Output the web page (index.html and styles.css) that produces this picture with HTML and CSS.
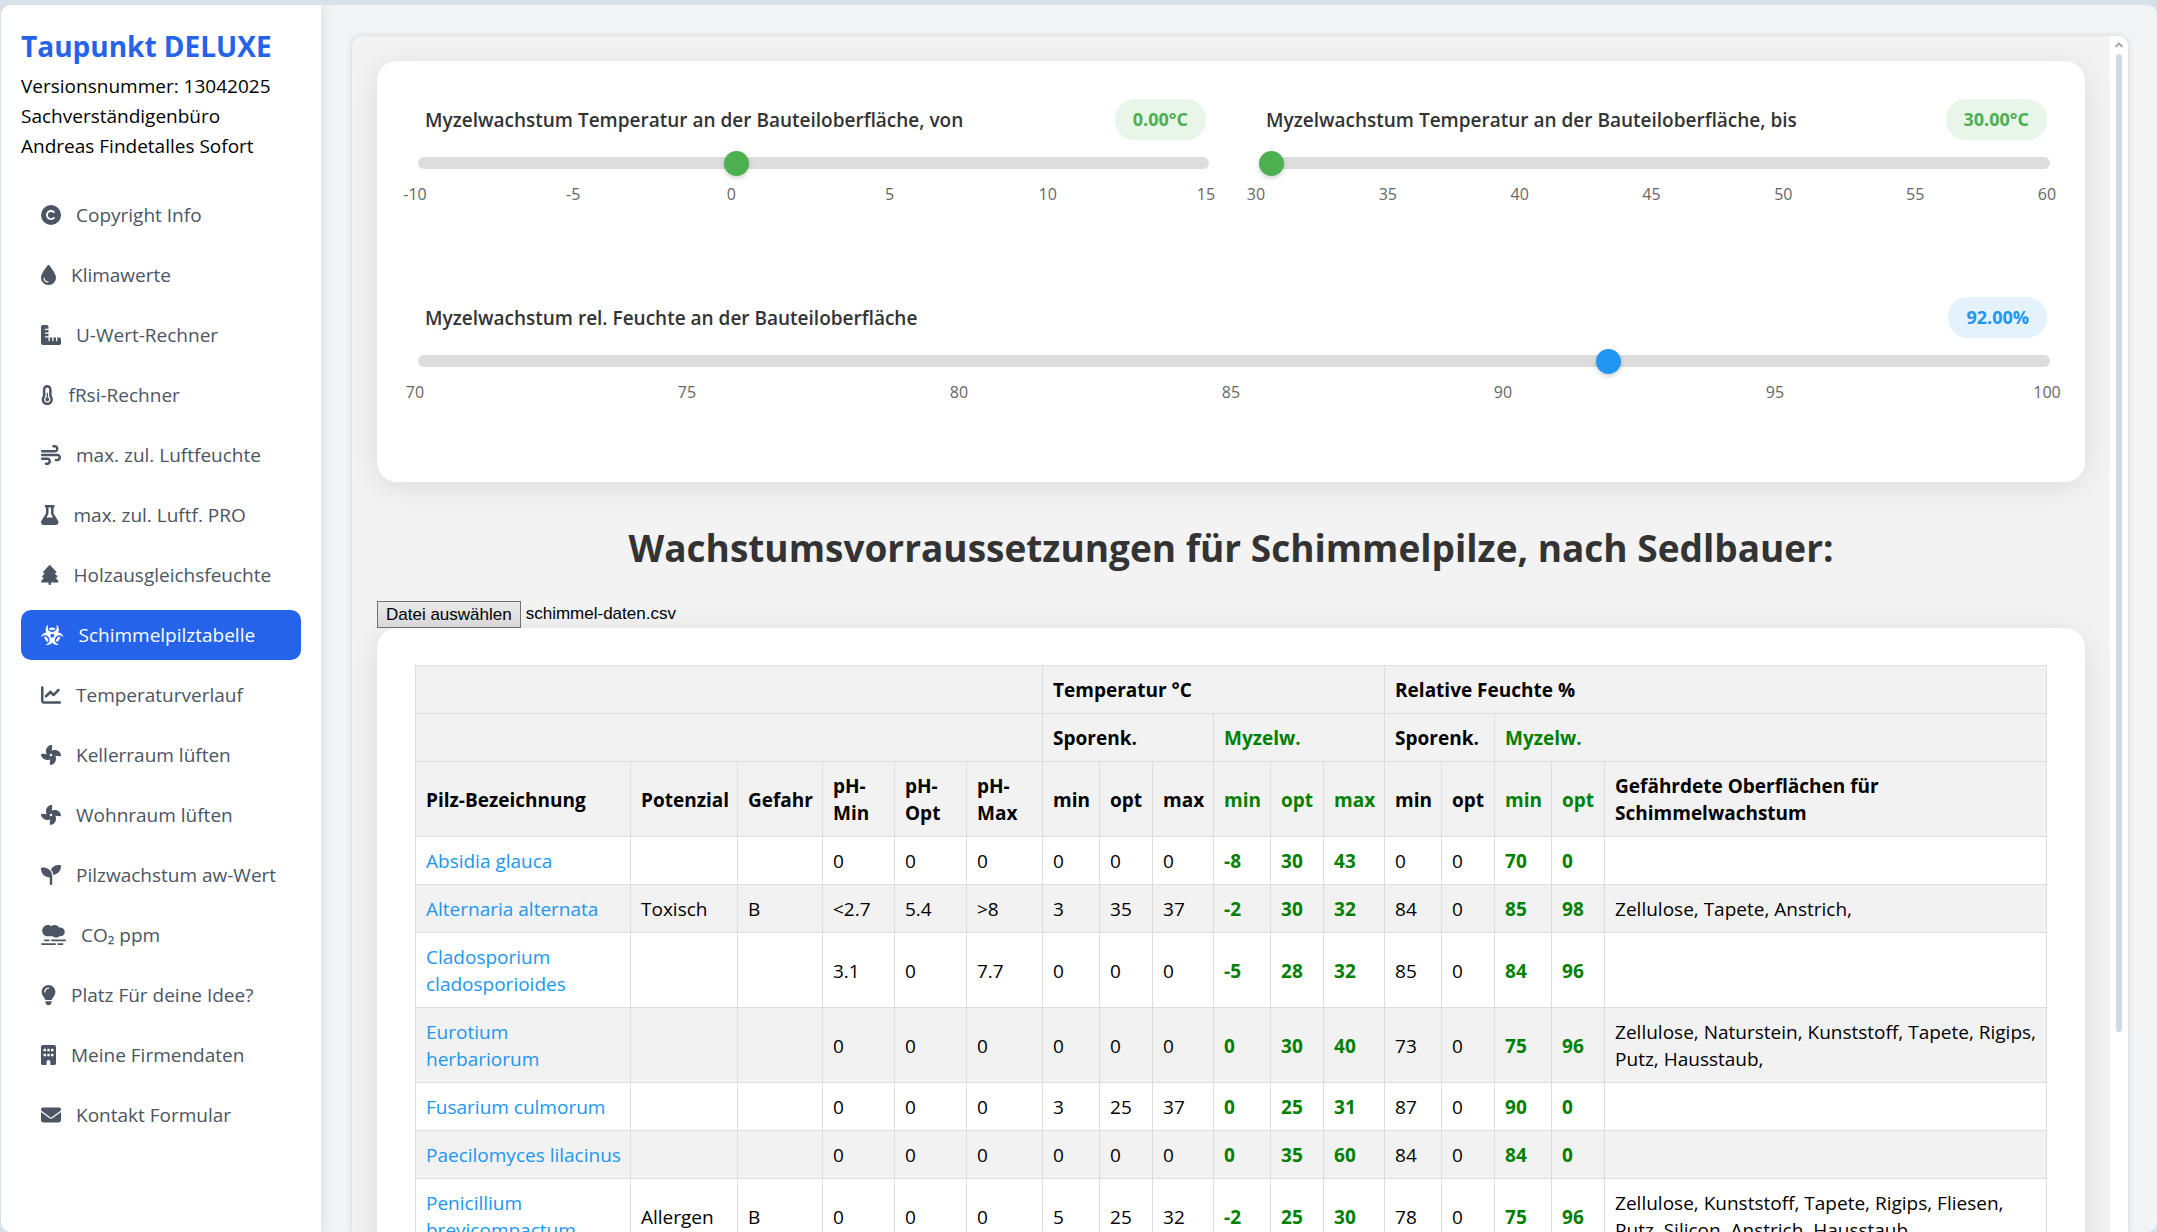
FILE: index.html
```html
<!DOCTYPE html>
<html lang="de">
<head>
  <meta charset="UTF-8">
  <meta name="viewport" content="width=device-width, initial-scale=1.0">
  <title>Taupunkt DELUXE</title>
  <link rel="stylesheet" href="styles.css">
</head>
<body>
  <div class="app">
    <!-- Seitenleiste -->
    <aside class="sidebar">
      <h2>Taupunkt DELUXE</h2>
      <p>Versionsnummer: 13042025<br>Sachverständigenbüro<br>Andreas Findetalles Sofort</p>
      <nav>
        <a href="#copyright"><svg viewBox="0 0 512 512"><path d="M256 512A256 256 0 1 0 256 0a256 256 0 1 0 0 512zM199.4 312.6c31.2 31.2 81.9 31.2 113.1 0c9.4-9.4 24.6-9.4 33.9 0s9.4 24.6 0 33.9c-50 50-131 50-181 0s-50-131 0-181s131-50 181 0c9.4 9.4 9.4 24.6 0 33.9s-24.6 9.4-33.9 0c-31.2-31.2-81.9-31.2-113.1 0s-31.2 81.9 0 113.1z"/></svg>Copyright Info</a>
        <a href="#klima"><svg viewBox="0 0 384 512"><path d="M192 512C86 512 0 426 0 320C0 228.8 130.2 57.7 166.6 11.7C172.6 4.2 181.5 0 191.1 0h1.8c9.6 0 18.5 4.2 24.5 11.7C253.8 57.7 384 228.8 384 320c0 106-86 192-192 192zM96 336c0-8.8-7.2-16-16-16s-16 7.2-16 16c0 61.9 50.1 112 112 112c8.8 0 16-7.2 16-16s-7.2-16-16-16c-44.2 0-80-35.8-80-80z"/></svg>Klimawerte</a>
        <a href="#uwert"><svg viewBox="0 0 512 512"><path d="M.2 468.9C2.7 493.1 23.1 512 48 512l96 0 320 0c26.5 0 48-21.5 48-48l0-96c0-26.5-21.5-48-48-48l-48 0 0 80c0 8.8-7.2 16-16 16s-16-7.2-16-16l0-80-64 0 0 80c0 8.8-7.2 16-16 16s-16-7.2-16-16l0-80-64 0 0 80c0 8.8-7.2 16-16 16s-16-7.2-16-16l0-80-80 0c-8.8 0-16-7.2-16-16s7.2-16 16-16l80 0 0-64-80 0c-8.8 0-16-7.2-16-16s7.2-16 16-16l80 0 0-64-80 0c-8.8 0-16-7.2-16-16s7.2-16 16-16l80 0 0-48c0-26.5-21.5-48-48-48L48 0C21.5 0 0 21.5 0 48L0 368l0 96c0 1.7 .1 3.3 .2 4.9z"/></svg>U-Wert-Rechner</a>
        <a href="#frsi"><svg viewBox="0 0 320 512"><path d="M160 64c-26.5 0-48 21.5-48 48V276.5c0 17.3-7.1 31.9-15.3 42.5C86.2 332.6 80 349.5 80 368c0 44.2 35.8 80 80 80s80-35.8 80-80c0-18.5-6.2-35.4-16.7-48.9c-8.2-10.6-15.3-25.2-15.3-42.5V112c0-26.5-21.5-48-48-48zM48 112C48 50.2 98.1 0 160 0s112 50.1 112 112V276.5c0 .1 .1 .3 .2 .6c.2 .6 .8 1.6 1.7 2.8c18.9 24.4 30.1 55 30.1 88.1c0 79.5-64.5 144-144 144S16 447.5 16 368c0-33.2 11.2-63.8 30.1-88.1c.9-1.2 1.5-2.2 1.7-2.8c.1-.3 .2-.5 .2-.6V112zM208 368c0 26.5-21.5 48-48 48s-48-21.5-48-48c0-20.9 13.4-38.7 32-45.3V208c0-8.8 7.2-16 16-16s16 7.2 16 16V322.7c18.6 6.6 32 24.4 32 45.3z"/></svg>fRsi-Rechner</a>
        <a href="#luftfeuchte"><svg viewBox="0 0 512 512"><path d="M288 32c0 17.7 14.3 32 32 32h32c17.7 0 32 14.3 32 32s-14.3 32-32 32H32c-17.7 0-32 14.3-32 32s14.3 32 32 32H352c53 0 96-43 96-96s-43-96-96-96H320c-17.7 0-32 14.3-32 32zm64 352c0 17.7 14.3 32 32 32h32c53 0 96-43 96-96s-43-96-96-96H32c-17.7 0-32 14.3-32 32s14.3 32 32 32H416c17.7 0 32 14.3 32 32s-14.3 32-32 32H384c-17.7 0-32 14.3-32 32zM128 512h32c53 0 96-43 96-96s-43-96-96-96H32c-17.7 0-32 14.3-32 32s14.3 32 32 32H160c17.7 0 32 14.3 32 32s-14.3 32-32 32H128c-17.7 0-32 14.3-32 32s14.3 32 32 32z"/></svg>max. zul. Luftfeuchte</a>
        <a href="#luftpro"><svg viewBox="0 0 448 512"><path d="M288 0H160 128C110.3 0 96 14.3 96 32s14.3 32 32 32V196.8c0 11.8-3.3 23.5-9.5 33.5L10.3 406.2C3.6 417.2 0 429.7 0 442.6C0 480.9 31.1 512 69.4 512H378.6c38.3 0 69.4-31.1 69.4-69.4c0-12.8-3.6-25.4-10.3-36.4L329.5 230.4c-6.2-10.1-9.5-21.7-9.5-33.5V64c17.7 0 32-14.3 32-32s-14.3-32-32-32H288zM192 196.8V64h64V196.8c0 23.7 6.6 46.9 19 67.1L309.5 320h-171L173 263.9c12.4-20.2 19-43.4 19-67.1z"/></svg>max. zul. Luftf. PRO</a>
        <a href="#holz"><svg viewBox="0 0 448 512"><path d="M210.6 5.9L62 169.4c-3.9 4.2-6 9.8-6 15.5C56 197.7 66.3 208 79.1 208H104L30.6 281.4c-4.2 4.2-6.6 10-6.6 16C24 309.9 34.1 320 46.6 320H80L5.4 409.5C1.9 413.7 0 419 0 424.5c0 13 10.5 23.5 23.5 23.5H192v32c0 17.7 14.3 32 32 32s32-14.3 32-32V448H424.5c13 0 23.5-10.5 23.5-23.5c0-5.5-1.9-10.8-5.4-15L368 320h33.4c12.5 0 22.6-10.1 22.6-22.6c0-6-2.4-11.8-6.6-16L344 208h24.9c12.7 0 23.1-10.3 23.1-23.1c0-5.7-2.1-11.3-6-15.5L237.4 5.9C234 2.1 229.1 0 224 0s-10 2.1-13.4 5.9z"/></svg>Holzausgleichsfeuchte</a>
        <a href="#schimmel" class="active"><svg viewBox="0 0 576 512"><path d="M173.2 0c-1.8 0-3.5 .7-4.8 2C138.5 32.3 120 74 120 120c0 26.2 6 50.9 16.6 73c-22 2.4-43.8 9.1-64.2 20.5C37.9 232.8 13.3 262.4 .4 296c-.7 1.7-.5 3.7 .5 5.2c2.2 3.7 7.4 4.3 10.6 1.3C64.2 254.3 158 245.1 205 324s-8.1 153.1-77.6 173.2c-4.2 1.2-6.3 5.9-4.1 9.6c1 1.6 2.6 2.7 4.5 3c36.5 5.9 75.2 .1 109.7-19.2c20.4-11.4 37.4-26.5 50.5-43.8c13.1 17.3 30.1 32.4 50.5 43.8c34.5 19.3 73.3 25.2 109.7 19.2c1.9-.3 3.5-1.4 4.5-3c2.2-3.7 .1-8.4-4.1-9.6C379.1 477.1 324 403 371 324s140.7-69.8 193.5-21.4c3.2 2.9 8.4 2.3 10.6-1.3c1-1.6 1.1-3.5 .5-5.2c-12.9-33.6-37.5-63.2-72.1-82.5c-20.4-11.4-42.2-18.1-64.2-20.5C450 170.9 456 146.2 456 120c0-46-18.5-87.7-48.4-118c-1.3-1.3-3-2-4.8-2c-5 0-8.4 5.2-6.7 9.9C421.7 80.5 385.6 176 288 176S154.3 80.5 179.9 9.9c1.7-4.7-1.6-9.9-6.7-9.9zM240 272a48 48 0 1 1 96 0 48 48 0 1 1 -96 0zM181.7 417.6c6.3-11.8 9.8-25.1 8.6-39.8c-19.5-18-34-41.4-41.2-67.8c-12.5-8.1-26.2-11.8-40-12.4c-9-.4-18.1 .6-27.1 2.7c7.8 57.1 38.7 106.8 82.9 139.4c6.8-6.7 12.6-14.1 16.8-22.1zM288 64c-28.8 0-56.3 5.9-81.2 16.5c2 8.3 5 16.2 9 23.5c6.8 12.4 16.7 23.1 30.1 30.3c13.3-4.1 27.5-6.3 42.2-6.3s28.8 2.2 42.2 6.3c13.4-7.2 23.3-17.9 30.1-30.3c4-7.3 7-15.2 9-23.5C344.3 69.9 316.8 64 288 64zM426.9 310c-7.2 26.4-21.7 49.7-41.2 67.8c-1.2 14.7 2.2 28.1 8.6 39.8c4.3 8 10 15.4 16.8 22.1c44.3-32.6 75.2-82.3 82.9-139.4c-9-2.2-18.1-3.1-27.1-2.7c-13.8 .6-27.5 4.4-40 12.4z"/></svg>Schimmelpilztabelle</a>
        <a href="#temperatur"><svg viewBox="0 0 512 512"><path d="M64 64c0-17.7-14.3-32-32-32S0 46.3 0 64V400c0 44.2 35.8 80 80 80H480c17.7 0 32-14.3 32-32s-14.3-32-32-32H80c-8.8 0-16-7.2-16-16V64zm406.6 86.6c12.5-12.5 12.5-32.8 0-45.3s-32.8-12.5-45.3 0L320 210.7l-57.4-57.4c-12.5-12.5-32.8-12.5-45.3 0l-112 112c-12.5 12.5-12.5 32.8 0 45.3s32.8 12.5 45.3 0L240 221.3l57.4 57.4c12.5 12.5 32.8 12.5 45.3 0l128-128z"/></svg>Temperaturverlauf</a>
        <a href="#keller"><svg viewBox="0 0 512 512"><path d="M258.6 0c-1.7 0-3.4 .1-5.1 .5C168 17 115.6 102.3 130.5 189.3c2.9 17 8.4 32.9 15.9 47.4L32 224H29.4C13.2 224 0 237.2 0 253.4c0 1.7 .1 3.4 .5 5.1C17 344 102.3 396.4 189.3 381.5c17-2.9 32.9-8.4 47.4-15.9L224 480v2.6c0 16.2 13.2 29.4 29.4 29.4c1.7 0 3.4-.1 5.1-.5C344 495 396.4 409.7 381.5 322.7c-2.9-17-8.4-32.9-15.9-47.4L480 288h2.6c16.2 0 29.4-13.2 29.4-29.4c0-1.7-.1-3.4-.5-5.1C495 168 409.7 115.6 322.7 130.5c-17 2.9-32.9 8.4-47.4 15.9L288 32V29.4C288 13.2 274.8 0 258.6 0zM256 224a32 32 0 1 1 0 64 32 32 0 1 1 0-64z"/></svg>Kellerraum lüften</a>
        <a href="#wohnraum"><svg viewBox="0 0 512 512"><path d="M258.6 0c-1.7 0-3.4 .1-5.1 .5C168 17 115.6 102.3 130.5 189.3c2.9 17 8.4 32.9 15.9 47.4L32 224H29.4C13.2 224 0 237.2 0 253.4c0 1.7 .1 3.4 .5 5.1C17 344 102.3 396.4 189.3 381.5c17-2.9 32.9-8.4 47.4-15.9L224 480v2.6c0 16.2 13.2 29.4 29.4 29.4c1.7 0 3.4-.1 5.1-.5C344 495 396.4 409.7 381.5 322.7c-2.9-17-8.4-32.9-15.9-47.4L480 288h2.6c16.2 0 29.4-13.2 29.4-29.4c0-1.7-.1-3.4-.5-5.1C495 168 409.7 115.6 322.7 130.5c-17 2.9-32.9 8.4-47.4 15.9L288 32V29.4C288 13.2 274.8 0 258.6 0zM256 224a32 32 0 1 1 0 64 32 32 0 1 1 0-64z"/></svg>Wohnraum lüften</a>
        <a href="#awwert"><svg viewBox="0 0 512 512"><path d="M512 32c0 113.6-84.6 207.5-194.2 222c-7.1-53.4-30.6-101.6-65.3-139.3C290.8 46.3 364 0 448 0h32c17.7 0 32 14.3 32 32zM0 96C0 78.3 14.3 64 32 64H64c123.7 0 224 100.3 224 224v32V480c0 17.7-14.3 32-32 32s-32-14.3-32-32V320C100.3 320 0 219.7 0 96z"/></svg>Pilzwachstum aw-Wert</a>
        <a href="#co2"><svg viewBox="0 0 640 512"><path d="M32 144c0 79.5 64.5 144 144 144H299.3c22.6 19.9 52.2 32 84.7 32s62.1-12.1 84.7-32H496c61.9 0 112-50.1 112-112s-50.1-112-112-112c-10.7 0-21 1.5-30.8 4.3C443.8 27.7 401.1 0 352 0c-32.6 0-62.4 12.2-85.1 32.3C242.1 12.1 210.5 0 176 0C96.5 0 32 64.5 32 144zM616 368H280c-13.3 0-24 10.7-24 24s10.7 24 24 24H616c13.3 0 24-10.7 24-24s-10.7-24-24-24zm-64 96H440c-13.3 0-24 10.7-24 24s10.7 24 24 24H552c13.3 0 24-10.7 24-24s-10.7-24-24-24zm-192 0H24c-13.3 0-24 10.7-24 24s10.7 24 24 24H360c13.3 0 24-10.7 24-24s-10.7-24-24-24zM224 392c0-13.3-10.7-24-24-24H96c-13.3 0-24 10.7-24 24s10.7 24 24 24H200c13.3 0 24-10.7 24-24z"/></svg>CO₂ ppm</a>
        <a href="#idee"><svg viewBox="0 0 384 512"><path d="M272 384c9.6-31.9 29.5-59.1 49.2-86.2l0 0c5.2-7.1 10.4-14.2 15.4-21.4c19.8-28.5 31.4-63 31.4-100.3C368 78.8 289.2 0 192 0S16 78.8 16 176c0 37.3 11.6 71.9 31.4 100.3c5 7.2 10.2 14.3 15.4 21.4l0 0c19.8 27.1 39.7 54.4 49.2 86.2H272zM192 512c44.2 0 80-35.8 80-80V416H112v16c0 44.2 35.8 80 80 80zM112 176c0 8.8-7.2 16-16 16s-16-7.2-16-16c0-61.9 50.1-112 112-112c8.8 0 16 7.2 16 16s-7.2 16-16 16c-44.2 0-80 35.8-80 80z"/></svg>Platz Für deine Idee?</a>
        <a href="#firma"><svg viewBox="0 0 384 512"><path d="M48 0C21.5 0 0 21.5 0 48V464c0 26.5 21.5 48 48 48h96V432c0-26.5 21.5-48 48-48s48 21.5 48 48v80h96c26.5 0 48-21.5 48-48V48c0-26.5-21.5-48-48-48H48zM64 240c0-8.8 7.2-16 16-16h32c8.8 0 16 7.2 16 16v32c0 8.8-7.2 16-16 16H80c-8.8 0-16-7.2-16-16V240zm112-16h32c8.8 0 16 7.2 16 16v32c0 8.8-7.2 16-16 16H176c-8.8 0-16-7.2-16-16V240c0-8.8 7.2-16 16-16zm80 16c0-8.8 7.2-16 16-16h32c8.8 0 16 7.2 16 16v32c0 8.8-7.2 16-16 16H272c-8.8 0-16-7.2-16-16V240zM80 96h32c8.8 0 16 7.2 16 16v32c0 8.8-7.2 16-16 16H80c-8.8 0-16-7.2-16-16V112c0-8.8 7.2-16 16-16zm80 16c0-8.8 7.2-16 16-16h32c8.8 0 16 7.2 16 16v32c0 8.8-7.2 16-16 16H176c-8.8 0-16-7.2-16-16V112zM272 96h32c8.8 0 16 7.2 16 16v32c0 8.8-7.2 16-16 16H272c-8.8 0-16-7.2-16-16V112c0-8.8 7.2-16 16-16z"/></svg>Meine Firmendaten</a>
        <a href="#kontakt"><svg viewBox="0 0 512 512"><path d="M48 64C21.5 64 0 85.5 0 112c0 15.1 7.1 29.3 19.2 38.4L236.8 313.6c11.4 8.5 27 8.5 38.4 0L492.8 150.4c12.1-9.1 19.2-23.3 19.2-38.4c0-26.5-21.5-48-48-48H48zM0 176V384c0 35.3 28.7 64 64 64H448c35.3 0 64-28.7 64-64V176L294.4 339.2c-22.8 17.1-54 17.1-76.8 0L0 176z"/></svg>Kontakt Formular</a>
      </nav>
    </aside>

    <main>
      <div class="frame">
        <div class="content">
          <!-- Schieberegler -->
          <section class="card sliders">
            <div class="slider-group">
              <div class="slider-header">
                <label for="tempVon">Myzelwachstum Temperatur an der Bauteiloberfläche, von</label>
                <output class="value green" for="tempVon">0.00°C</output>
              </div>
              <input type="range" id="tempVon" min="-10" max="15" step="0.1" value="0">
              <div class="ticks"><span>-10</span><span>-5</span><span>0</span><span>5</span><span>10</span><span>15</span></div>
            </div>
            <div class="slider-group">
              <div class="slider-header">
                <label for="tempBis">Myzelwachstum Temperatur an der Bauteiloberfläche, bis</label>
                <output class="value green" for="tempBis">30.00°C</output>
              </div>
              <input type="range" id="tempBis" min="30" max="60" step="0.1" value="30">
              <div class="ticks"><span>30</span><span>35</span><span>40</span><span>45</span><span>50</span><span>55</span><span>60</span></div>
            </div>
            <div class="slider-group wide">
              <div class="slider-header">
                <label for="feuchte">Myzelwachstum rel. Feuchte an der Bauteiloberfläche</label>
                <output class="value blue" for="feuchte">92.00%</output>
              </div>
              <input type="range" id="feuchte" class="blue-range" min="70" max="100" step="0.1" value="92">
              <div class="ticks"><span>70</span><span>75</span><span>80</span><span>85</span><span>90</span><span>95</span><span>100</span></div>
            </div>
          </section>

          <h1>Wachstumsvorraussetzungen für Schimmelpilze, nach Sedlbauer:</h1>

          <div class="file-row">
            <input type="file" id="csvFile" accept=".csv">
            <label for="csvFile">Datei auswählen</label>
            <span>schimmel-daten.csv</span>
          </div>

          <section class="card table-card">
            <table>
              <colgroup>
                <col class="name"><col class="potenzial"><col class="gefahr">
                <col class="ph"><col class="ph"><col class="ph-max">
                <col class="min"><col class="opt"><col class="max">
                <col class="min"><col class="opt"><col class="max">
                <col class="min"><col class="opt"><col class="min"><col class="opt">
                <col class="surface">
              </colgroup>
              <thead>
                <tr><th colspan="6"></th><th colspan="6">Temperatur °C</th><th colspan="5">Relative Feuchte %</th></tr>
                <tr><th colspan="6"></th><th colspan="3">Sporenk.</th><th colspan="3" class="myz">Myzelw.</th><th colspan="2">Sporenk.</th><th colspan="3" class="myz">Myzelw.</th></tr>
                <tr>
                  <th>Pilz-Bezeichnung</th><th>Potenzial</th><th>Gefahr</th><th>pH-<br>Min</th><th>pH-<br>Opt</th><th>pH-<br>Max</th>
                  <th>min</th><th>opt</th><th>max</th><th class="myz">min</th><th class="myz">opt</th><th class="myz">max</th>
                  <th>min</th><th>opt</th><th class="myz">min</th><th class="myz">opt</th><th>Gefährdete Oberflächen für Schimmelwachstum</th>
                </tr>
              </thead>
              <tbody>
                <tr><td><a href="#absidia">Absidia glauca</a></td><td></td><td></td><td>0</td><td>0</td><td>0</td><td>0</td><td>0</td><td>0</td><td class="myz">-8</td><td class="myz">30</td><td class="myz">43</td><td>0</td><td>0</td><td class="myz">70</td><td class="myz">0</td><td></td></tr>
                <tr><td><a href="#alternaria">Alternaria alternata</a></td><td>Toxisch</td><td>B</td><td>&lt;2.7</td><td>5.4</td><td>&gt;8</td><td>3</td><td>35</td><td>37</td><td class="myz">-2</td><td class="myz">30</td><td class="myz">32</td><td>84</td><td>0</td><td class="myz">85</td><td class="myz">98</td><td>Zellulose, Tapete, Anstrich,</td></tr>
                <tr><td><a href="#cladosporium">Cladosporium cladosporioides</a></td><td></td><td></td><td>3.1</td><td>0</td><td>7.7</td><td>0</td><td>0</td><td>0</td><td class="myz">-5</td><td class="myz">28</td><td class="myz">32</td><td>85</td><td>0</td><td class="myz">84</td><td class="myz">96</td><td></td></tr>
                <tr><td><a href="#eurotium">Eurotium<br>herbariorum</a></td><td></td><td></td><td>0</td><td>0</td><td>0</td><td>0</td><td>0</td><td>0</td><td class="myz">0</td><td class="myz">30</td><td class="myz">40</td><td>73</td><td>0</td><td class="myz">75</td><td class="myz">96</td><td>Zellulose, Naturstein, Kunststoff, Tapete, Rigips, Putz, Hausstaub,</td></tr>
                <tr><td><a href="#fusarium">Fusarium culmorum</a></td><td></td><td></td><td>0</td><td>0</td><td>0</td><td>3</td><td>25</td><td>37</td><td class="myz">0</td><td class="myz">25</td><td class="myz">31</td><td>87</td><td>0</td><td class="myz">90</td><td class="myz">0</td><td></td></tr>
                <tr><td><a href="#paecilomyces">Paecilomyces lilacinus</a></td><td></td><td></td><td>0</td><td>0</td><td>0</td><td>0</td><td>0</td><td>0</td><td class="myz">0</td><td class="myz">35</td><td class="myz">60</td><td>84</td><td>0</td><td class="myz">84</td><td class="myz">0</td><td></td></tr>
                <tr><td><a href="#penicillium">Penicillium brevicompactum</a></td><td>Allergen</td><td>B</td><td>0</td><td>0</td><td>0</td><td>5</td><td>25</td><td>32</td><td class="myz">-2</td><td class="myz">25</td><td class="myz">30</td><td>78</td><td>0</td><td class="myz">75</td><td class="myz">96</td><td>Zellulose, Kunststoff, Tapete, Rigips, Fliesen, Putz, Silicon, Anstrich, Hausstaub,</td></tr>
              </tbody>
            </table>
          </section>
        </div>
        <div class="scrollbar">
          <svg viewBox="0 0 10 7"><path d="M1.5 5.5 5 2l3.5 3.5"/></svg>
          <div class="track"><div class="thumb"></div></div>
        </div>
      </div>
    </main>
  </div>
</body>
</html>
```
FILE: styles.css
```css
* {
  box-sizing: border-box;
}

body {
  margin: 0;
  height: 100vh;
  padding: 5px 0 0 1px;
  overflow: hidden;
  background: #d7e1e9;
  font-family: "Open Sans", "Noto Sans", sans-serif;
  font-size: 19px;
  color: #000;
}

.app {
  display: flex;
  height: 100%;
  border-radius: 10px;
  overflow: hidden;
  background: #f3f4f6;
}

/* Seitenleiste */
.sidebar {
  width: 320px;
  flex-shrink: 0;
  padding: 21px 20px;
  background: #fff;
  box-shadow: 2px 0 12px rgba(0, 0, 0, 0.1);
}

.sidebar h2 {
  margin: 0 0 5px;
  font-size: 28px;
  line-height: 40px;
  color: #2563eb;
}

.sidebar p {
  margin: 0 0 29px;
  line-height: 30px;
  white-space: nowrap;
}

.sidebar nav {
  display: flex;
  flex-direction: column;
  gap: 10px;
}

.sidebar a {
  display: flex;
  align-items: center;
  gap: 15px;
  height: 50px;
  padding: 0 20px;
  border-radius: 10px;
  color: #4b5563;
  text-decoration: none;
  white-space: nowrap;
}

.sidebar a.active {
  background: #2563eb;
  color: #fff;
}

.sidebar svg {
  height: 20px;
  fill: currentColor;
}

/* Inhalt */
main {
  flex: 1;
  min-width: 0;
  padding: 31px 29px 0 31px;
}

.frame {
  display: flex;
  height: 100%;
  border-radius: 10px 10px 0 0;
  background: #f3f3f3;
  box-shadow: 0 0 6px rgba(0, 0, 0, 0.15);
  overflow: hidden;
}

.content {
  flex: 1;
  min-width: 0;
  padding: 25px;
  overflow: hidden;
}

.card {
  border-radius: 20px;
  background: #fff;
  box-shadow: 0 5px 30px rgba(0, 0, 0, 0.1);
}

.sliders {
  display: grid;
  grid-template-columns: 1fr 1fr;
  gap: 50px;
  padding: 38px 38px 37px;
}

.wide {
  grid-column: span 2;
}

.slider-group {
  height: 148px;
}

.slider-header {
  display: flex;
  justify-content: space-between;
  align-items: center;
  height: 41px;
  margin-bottom: 17px;
  padding-left: 10px;
}

.slider-header label {
  font-weight: 600;
  color: #333;
}

.value {
  padding: 0 18px;
  border-radius: 20px;
  font-size: 18px;
  line-height: 41px;
  font-weight: 700;
}

.green {
  background: #e8f5e9;
  color: #4caf50;
}

.blue {
  background: #e3f2fd;
  color: #2196f3;
}

input[type="range"] {
  -webkit-appearance: none;
  appearance: none;
  display: block;
  width: 100%;
  height: 12px;
  margin: 0 3px;
  border-radius: 6px;
  background: #ddd;
}

input[type="range"]::-webkit-slider-thumb {
  -webkit-appearance: none;
  width: 25px;
  height: 25px;
  border-radius: 50%;
  background: #4caf50;
  box-shadow: 0 2px 5px rgba(0, 0, 0, 0.2);
}

input.blue-range::-webkit-slider-thumb {
  background: #2196f3;
}

.ticks {
  display: flex;
  justify-content: space-between;
  margin-top: 13px;
  font-size: 16px;
  line-height: 24px;
  color: #666;
}

.ticks span {
  display: flex;
  justify-content: center;
  width: 0;
}

h1 {
  margin: 39px 0 26px;
  font-size: 37px;
  line-height: 54px;
  text-align: center;
  color: #333;
}

/* Dateiauswahl */
.file-row {
  display: flex;
  gap: 5px;
  font-family: "Liberation Sans", Arial, sans-serif;
  font-size: 17px;
  line-height: 25px;
}

.file-row input {
  display: none;
}

.file-row label {
  padding: 0 8px;
  border: 1px solid #707070;
  background: linear-gradient(#eaeaea, #d8d8d8);
}

/* Tabelle */
.table-card {
  padding: 37px 38px;
}

table {
  width: 100%;
  table-layout: fixed;
  border-collapse: collapse;
}

th,
td {
  height: 48px;
  padding: 11px 8px 9px 10px;
  border: 1px solid #ddd;
  line-height: 27px;
  text-align: left;
}

thead tr,
tbody tr:nth-child(even) {
  background: #f2f2f2;
}

td a {
  color: #2196f3;
  text-decoration: none;
}

.myz {
  font-weight: 700;
  color: #008000;
}

.name { width: 215px; }
.potenzial { width: 107px; }
.gefahr { width: 85px; }
.ph { width: 72px; }
.ph-max { width: 76px; }
.min { width: 57px; }
.opt { width: 53px; }
.max { width: 61px; }

/* Bildlaufleiste */
.scrollbar {
  display: flex;
  flex-direction: column;
  align-items: center;
  width: 18px;
  background: #fff;
}

.scrollbar svg {
  width: 10px;
  height: 18px;
  fill: none;
  stroke: #aaa;
  stroke-width: 2;
}

.track {
  flex: 1;
}

.thumb {
  width: 6px;
  height: 83%;
  border-radius: 3px;
  background: #cfdae3;
}
```
